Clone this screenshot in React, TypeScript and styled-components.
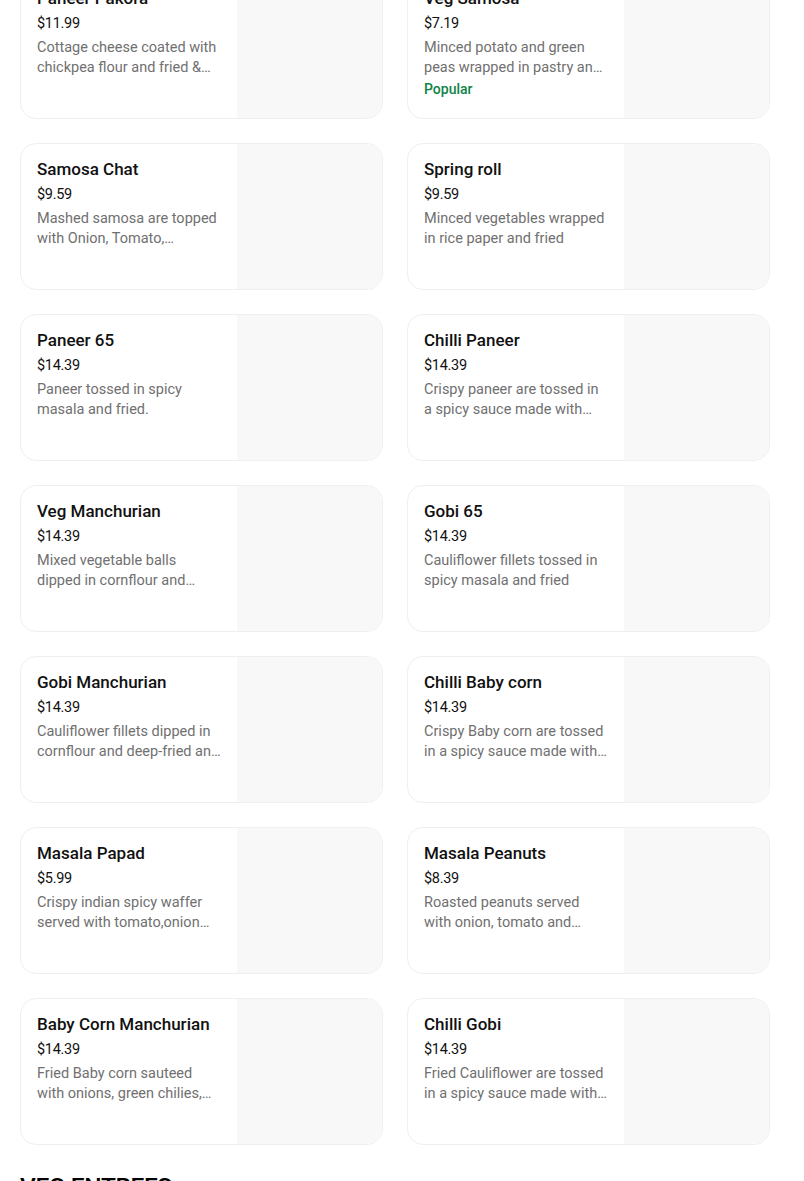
import React from "react";
import styled, { createGlobalStyle } from "styled-components";

const Global = createGlobalStyle`
  html, body { margin: 0; padding: 0; background: #fff; }
  body { font-family: Roboto, "Noto Sans", sans-serif; color: #000; overflow: hidden; }
`;

const Page = styled.div`
  padding: 0 34px 0 20px;
  margin-top: -28px;
`;

const Grid = styled.div`
  display: grid;
  grid-template-columns: 1fr 1fr;
  column-gap: 24px;
  row-gap: 24px;
`;

const Card = styled.div`
  display: flex;
  height: 147px;
  box-sizing: border-box;
  border: 1px solid #efefef;
  border-radius: 16px;
  overflow: hidden;
  background: #fff;
`;

const Info = styled.div`
  flex: 1;
  min-width: 0;
  padding: 14px 16px 16px 16px;
  display: flex;
  flex-direction: column;
`;

const Title = styled.div`
  font-size: 17px;
  font-weight: 500;
  line-height: 22px;
  color: #111;
  white-space: nowrap;
  overflow: hidden;
  text-overflow: ellipsis;
`;

const Price = styled.div`
  font-size: 14.5px;
  line-height: 20px;
  margin-top: 5px;
  letter-spacing: -0.3px;
  color: #111;
`;

const Desc = styled.div`
  font-size: 14.5px;
  line-height: 20px;
  color: #707070;
  margin-top: 4px;
  display: -webkit-box;
  -webkit-line-clamp: 2;
  -webkit-box-orient: vertical;
  overflow: hidden;
`;

const Badge = styled.div`
  font-size: 14px;
  line-height: 20px;
  font-weight: 500;
  color: #0e8345;
  margin-top: 1px;
`;

const Thumb = styled.div`
  width: 145px;
  flex-shrink: 0;
  background: #f8f8f8;
`;

const Heading = styled.h2`
  margin: 25px 0 0;
  font-size: 24.5px;
  font-weight: 500;
  line-height: 34px;
  letter-spacing: -0.4px;
`;

type Item = { name: string; price: string; desc: string; popular?: boolean };

const items: Item[] = [
  { name: "Paneer Pakora", price: "$11.99", desc: "Cottage cheese coated with chickpea flour and fried & served with chutney" },
  { name: "Veg Samosa", price: "$7.19", desc: "Minced potato and green peas wrapped in pastry and fried", popular: true },
  { name: "Samosa Chat", price: "$9.59", desc: "Mashed samosa are topped with Onion, Tomato, chutneys and yogurt" },
  { name: "Spring roll", price: "$9.59", desc: "Minced vegetables wrapped in rice paper and fried" },
  { name: "Paneer 65", price: "$14.39", desc: "Paneer tossed in spicy masala and fried." },
  { name: "Chilli Paneer", price: "$14.39", desc: "Crispy paneer are tossed in a spicy sauce made with soy sauce and chillies" },
  { name: "Veg Manchurian", price: "$14.39", desc: "Mixed vegetable balls dipped in cornflour and tossed in manchurian sauce" },
  { name: "Gobi 65", price: "$14.39", desc: "Cauliflower fillets tossed in spicy masala and fried" },
  { name: "Gobi Manchurian", price: "$14.39", desc: "Cauliflower fillets dipped in cornflour and deep-fried and tossed in sauce" },
  { name: "Chilli Baby corn", price: "$14.39", desc: "Crispy Baby corn are tossed in a spicy sauce made with soy sauce" },
  { name: "Masala Papad", price: "$5.99", desc: "Crispy indian spicy waffer served with tomato,onion and spices" },
  { name: "Masala Peanuts", price: "$8.39", desc: "Roasted peanuts served with onion, tomato and tangy spices" },
  { name: "Baby Corn Manchurian", price: "$14.39", desc: "Fried Baby corn sauteed with onions, green chilies, and sauce" },
  { name: "Chilli Gobi", price: "$14.39", desc: "Fried Cauliflower are tossed in a spicy sauce made with soy sauce" },
];

export default function App() {
  return (
    <>
      <Global />
      <Page>
        <Grid>
          {items.map((it) => (
            <Card key={it.name}>
              <Info>
                <Title>{it.name}</Title>
                <Price>{it.price}</Price>
                <Desc>{it.desc}</Desc>
                {it.popular && <Badge>Popular</Badge>}
              </Info>
              <Thumb />
            </Card>
          ))}
        </Grid>
        <Heading>VEG ENTREES</Heading>
      </Page>
    </>
  );
}
